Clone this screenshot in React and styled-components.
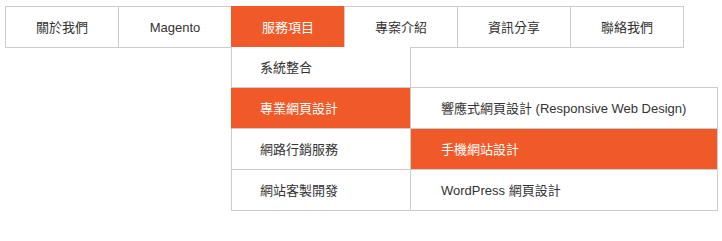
import styled, { createGlobalStyle } from 'styled-components';

// --orange: #f05a28;
// --line: #cccccc;
// --text: #333;

const GlobalStyle = createGlobalStyle`
  html, body {
    min-height: 100%;
  }
  body {
    margin: 0;
    padding: 6px 5px;
    background: #fff;
    font-family: "Liberation Sans", "Noto Sans CJK TC", sans-serif;
    font-size: 13px;
    line-height: 1;
    color: #333;
  }
  ul {
    list-style: none;
    margin: 0;
    padding: 0;
  }
`;

const menu = [
  { label: '關於我們' },
  { label: 'Magento' },
  {
    label: '服務項目',
    active: true,
    children: [
      { label: '系統整合' },
      {
        label: '專業網頁設計',
        active: true,
        children: [
          { label: '響應式網頁設計 (Responsive Web Design)' },
          { label: '手機網站設計', active: true },
          { label: 'WordPress 網頁設計' },
        ],
      },
      { label: '網路行銷服務' },
      { label: '網站客製開發' },
    ],
  },
  { label: '專案介紹' },
  { label: '資訊分享' },
  { label: '聯絡我們' },
];

const App = () => {
  return (
    <Page>
      <GlobalStyle />
      <NavBar>
        {menu.map((item) => (
          <NavItem key={item.label} $active={item.active}>
            <NavLink $active={item.active}>{item.label}</NavLink>
            {item.children && (
              <Dropdown>
                {item.children.map((sub) => (
                  <DropItem key={sub.label} $active={sub.active}>
                    {sub.label}
                    {sub.children && (
                      <SubMenu>
                        {sub.children.map((leaf) => (
                          <SubItem key={leaf.label} $active={leaf.active}>
                            {leaf.label}
                          </SubItem>
                        ))}
                      </SubMenu>
                    )}
                  </DropItem>
                ))}
              </Dropdown>
            )}
          </NavItem>
        ))}
      </NavBar>
    </Page>
  );
};

export default App;

const Page = styled.div`
  min-height: 228px;
`;

const NavBar = styled.ul`
  display: flex;
  width: max-content;
`;

const NavItem = styled.li`
  position: relative;
  width: 113px;
  box-sizing: border-box;
  border-top: 1px solid ${(p) => (p.$active ? '#f05a28' : '#cccccc')};
  border-bottom: 1px solid #cccccc;
  border-left: 1px solid ${(p) => (p.$active ? '#f05a28' : '#cccccc')};
  background: ${(p) => (p.$active ? '#f05a28' : '#fff')};

  &:last-child {
    width: 114px;
    border-right: 1px solid #cccccc;
  }
`;

const NavLink = styled.a`
  display: flex;
  align-items: center;
  justify-content: center;
  height: 40px;
  color: ${(p) => (p.$active ? '#fff' : '#333')};
  cursor: pointer;
`;

const Dropdown = styled.ul`
  position: absolute;
  top: 100%;
  left: -1px;
  width: 180px;
  z-index: 2;
`;

const DropItem = styled.li`
  position: relative;
  display: flex;
  align-items: center;
  height: 40px;
  padding-left: 28px;
  background: ${(p) => (p.$active ? '#f05a28' : '#fff')};
  color: ${(p) => (p.$active ? '#fff' : '#333')};
  border: 1px solid #cccccc;
  border-top: none;
  border-left-color: ${(p) => (p.$active ? '#f05a28' : '#cccccc')};
`;

const SubMenu = styled.ul`
  position: absolute;
  top: -1px;
  left: 100%;
  width: 308px;
  box-sizing: border-box;
  border: 1px solid #cccccc;
  z-index: 3;
`;

const SubItem = styled.li`
  display: flex;
  align-items: center;
  height: 40px;
  padding-left: 30px;
  background: ${(p) => (p.$active ? '#f05a28' : '#fff')};
  color: ${(p) => (p.$active ? '#fff' : '#333')};
  border-bottom: 1px solid #cccccc;

  &:last-child {
    border-bottom: none;
  }
`;
